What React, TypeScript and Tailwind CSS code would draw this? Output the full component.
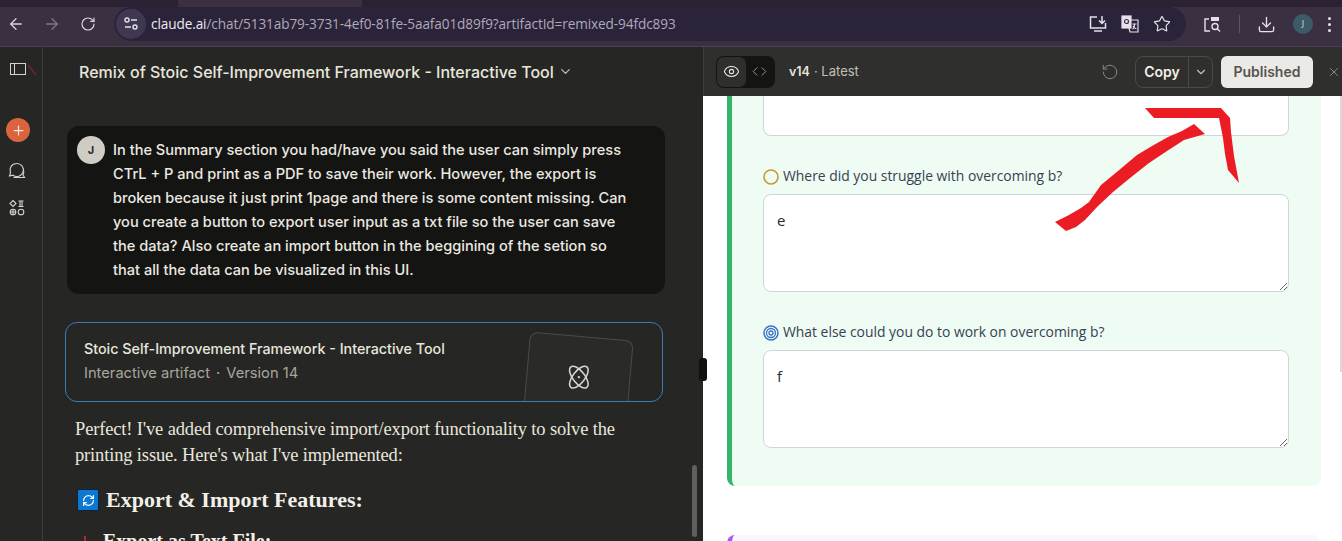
import React from "react";
import {
	ArrowLeft,
	ArrowRight,
	ChevronDown,
	Code,
	Download,
	Eye,
	Plus,
	RefreshCw,
	RotateCcw,
	RotateCw,
	Star,
	X,
} from "lucide-react";

const uiFont = "font-['Inter','Noto_Sans',sans-serif]";

const TuneIcon = () => (
	<svg width="16" height="16" viewBox="0 0 16 16" fill="none" stroke="#e6e0ea" strokeWidth="1.4">
		<circle cx="4" cy="4" r="2" />
		<path d="M8 4h6M2 11h6" />
		<circle cx="12" cy="11" r="2" />
	</svg>
);

const InstallIcon = () => (
	<svg width="20" height="20" viewBox="0 0 20 20" fill="none" stroke="#e6e0ea" strokeWidth="1.5">
		<path d="M9 3H2.500v11h15V9M6 17h8M14 2v7M11 6.500l3 3 3-3" />
	</svg>
);

const TranslateIcon = () => (
	<svg width="20" height="20" viewBox="0 0 20 20" fill="none" stroke="#e6e0ea" strokeWidth="1.2">
		<rect x="2" y="2" width="9" height="12" fill="#e6e0ea" />
		<path d="M11 6h7v12h-8l-1-4" />
		<path d="M12.500 10h4M14.500 10c0 3-1 4.500-2 5M13 12c.8 1.500 2 2.500 3.500 3" />
		<circle cx="6.500" cy="7.500" r="2" stroke="#3a3042" />
	</svg>
);

const LensIcon = () => (
	<svg width="20" height="20" viewBox="0 0 20 20" fill="none" stroke="#e6e0ea" strokeWidth="1.4">
		<path d="M8 17H3V5h4" />
		<rect x="9" y="3" width="8" height="4" fill="#e6e0ea" stroke="none" />
		<circle cx="13" cy="12.500" r="3" />
		<path d="M15.200 14.700L18 17.500" />
	</svg>
);

const PanelIcon = () => (
	<svg width="30" height="30" viewBox="0 0 30 30" fill="none">
		<rect x="2.500" y="6.500" width="15" height="11" stroke="#d6d4cc" strokeWidth="1" />
		<path d="M6.500 6.500v11" stroke="#d6d4cc" strokeWidth="1" />
		<path d="M20 8l8 10" stroke="#b3262a" strokeWidth="1" />
	</svg>
);

const ChatsIcon = () => (
	<svg width="20" height="20" viewBox="0 0 20 20" fill="none" stroke="#d6d4cc" strokeWidth="1.1">
		<path d="M9.500 2.500a6.500 6.500 0 0 0-6 9l-1 3.500 3.500-.8a6.500 6.500 0 1 0 3.500-11.700z" />
		<path d="M6.500 16.500h11l-1.500-2.500c.8-1.500 1-3 .5-4.500" />
	</svg>
);

const ProjectsIcon = () => (
	<svg width="18" height="18" viewBox="0 0 18 18" fill="none" stroke="#d6d4cc" strokeWidth="1.100">
		<path d="M5 1.500L8 4.500 5 7.500 2 4.500z" />
		<path d="M10.500 2h5M10.500 7.500h5M12 2v5.500M14 2v5.500" />
		<circle cx="5" cy="13" r="2.800" />
		<circle cx="13" cy="13" r="2.800" />
		<path d="M2 13h6M5 10v6" />
	</svg>
);

const ArtifactAtom = () => (
	<svg width="28" height="28" viewBox="0 0 28 28" fill="none" stroke="#d6d4cc" strokeWidth="1.500">
		<ellipse cx="14" cy="14" rx="6" ry="13" transform="rotate(-38 14 14)" />
		<ellipse cx="14" cy="14" rx="6" ry="13" transform="rotate(38 14 14)" />
		<circle cx="14" cy="14" r="1.200" fill="#d6d4cc" stroke="none" />
	</svg>
);

// the hand drawn arrow pasted over the screenshot
const RedArrow = () => (
	<svg className="absolute left-[1040px] top-[100px]" width="210" height="140" viewBox="0 0 210 140" fill="#ec1c24">
		<path d="M105 8H181L190 18L191 32L194 56L199 83L188 70L185 54L183 38L179 18H114Z" />
		<path d="M15 122L29 115L41 108L49 102L61 85L78 71L97 55L112 46L128 37L142 31L154 24L165 34L144 40L127 51L109 63L90 78L73 92L58 106L45 120L36 127L26 131Z" />
	</svg>
);

const YellowRing = () => (
	<svg width="16" height="16" viewBox="0 0 16 16" fill="none">
		<circle cx="8" cy="8" r="7" stroke="#c69a2f" strokeWidth="1.600" />
	</svg>
);

const BlueTarget = () => (
	<svg width="16" height="16" viewBox="0 0 16 16" fill="none" stroke="#3b73c9">
		<circle cx="8" cy="8" r="7" strokeWidth="1.500" />
		<circle cx="8" cy="8" r="4.500" strokeWidth="1.300" />
		<circle cx="8" cy="8" r="2" strokeWidth="1.300" />
	</svg>
);

const Question = ({ icon, label, value }: { icon: React.ReactNode; label: string; value: string }) => (
	<div>
		<label className="flex items-center gap-[4px] h-[20px] pt-[2px] mb-[8px] text-[13.900px] font-medium text-[#374151]">
			{icon}
			<span className="mt-[-2px]">{label}</span>
		</label>
		<textarea
			readOnly
			defaultValue={value}
			className="block w-full h-[98px] px-[13px] py-[14px] bg-white border border-[#d1d5db] rounded-[8px] text-[15px] leading-[22px] text-[#1f2937] outline-none resize-y"
		/>
	</div>
);

const App = () => {
	return (
		<div className="relative w-[1342px] h-[541px] overflow-hidden flex flex-col bg-[#262624]">
			{/* Browser chrome */}
			<div className="h-[7px] flex bg-[#2b2333]">
				<div className="ml-[178px] w-[184px] bg-[#3a3042]" />
			</div>
			<div className="h-[40px] flex items-start bg-[#3a3042] border-b border-[#4a4152] font-['Open_Sans',sans-serif]">
				<div className="flex items-center h-[34px] w-[114px] pl-[7px] shrink-0">
					<ArrowLeft size={18} strokeWidth={1.7} className="text-[#d9d3de]" />
					<ArrowRight size={18} strokeWidth={1.7} className="ml-[18px] text-[#7f7787]" />
					<RotateCw size={16} strokeWidth={1.8} className="ml-[19px] text-[#d9d3de]" />
				</div>
				<div className="flex items-center w-[1072px] h-[34px] shrink-0 rounded-full bg-[#2b2339]">
					<div className="ml-[2px] w-[30px] h-[30px] rounded-full bg-[#3f3850] flex items-center justify-center">
						<TuneIcon />
					</div>
					<span className="ml-[5px] text-[13.600px] text-[#b0a9b8] tracking-[-0.1px]">
						<span className="text-[#efeaf2]">claude.ai</span>/chat/5131ab79-3731-4ef0-81fe-5aafa01d89f9?artifactId=remixed-94fdc893
					</span>
					<div className="ml-auto mr-[15px] flex items-center">
						<InstallIcon />
						<span className="ml-[12px]"><TranslateIcon /></span>
						<Star size={18} strokeWidth={1.6} className="ml-[13px] text-[#e6e0ea]" />
					</div>
				</div>
				<div className="flex items-center h-[34px] flex-1 min-w-0">
					<span className="ml-[16px] shrink-0"><LensIcon /></span>
					<div className="ml-[17px] w-px h-[18px] shrink-0 bg-[#5d5566]" />
					<Download size={19} strokeWidth={1.7} className="ml-[17px] shrink-0 text-[#e6e0ea]" />
					<div className="ml-[17px] w-[20px] h-[20px] shrink-0 rounded-full bg-[#3c5a68] text-[9px] text-[#cfe0e6] flex items-center justify-center">J</div>
					<div className="ml-[15px] flex flex-col gap-[3px] shrink-0">
						<span className="w-[3px] h-[3px] rounded-full bg-[#e6e0ea]" />
						<span className="w-[3px] h-[3px] rounded-full bg-[#e6e0ea]" />
						<span className="w-[3px] h-[3px] rounded-full bg-[#e6e0ea]" />
					</div>
				</div>
			</div>

			<div className="flex flex-1 min-h-0">
				{/* Claude chat column */}
				<div className={`relative w-[703px] flex min-h-0 overflow-hidden bg-[#262624] ${uiFont}`}>
					<div className="w-[43px] shrink-0 border-r border-[#3e3e3b] flex flex-col items-start">
						<div className="mt-[10px] ml-[8px]"><PanelIcon /></div>
						<div className="mt-[31px] ml-[6px] w-[24px] h-[24px] rounded-full bg-[#d9643f] flex items-center justify-center">
							<Plus size={15} strokeWidth={2} className="text-[#f5e6df]" />
						</div>
						<div className="mt-[19px] ml-[7px]"><ChatsIcon /></div>
						<div className="mt-[18px] ml-[8px]"><ProjectsIcon /></div>
					</div>
					<div className="flex-1 min-w-0">
						<div className="h-[49px] flex items-center pl-[36px] text-[16px] font-medium text-[#e8e6dd]">
							Remix of Stoic Self-Improvement Framework - Interactive Tool
							<ChevronDown size={15} className="ml-[4px] text-[#c2c0b6]" />
						</div>
						<div className="ml-[24px] mr-[38px] mt-[30px] h-[168px] rounded-[12px] bg-[#141413] flex pl-[10px] pt-[10px]">
							<div className="w-[28px] h-[28px] shrink-0 rounded-full bg-[#cfccc3] text-[#2b2b29] text-[11px] font-bold flex items-center justify-center">J</div>
							<p className="ml-[8px] mt-[2px] w-[520px] text-[14.600px] leading-[24px] font-medium text-[#ebe9e0]">
								In the Summary section you had/have you said the user can simply press CTrL + P and print as a PDF to save their work. However, the export is broken because it just print 1page and there is some content missing. Can you create a button to export user input as a txt file so the user can save the data? Also create an import button in the beggining of the setion so that all the data can be visualized in this UI.
							</p>
						</div>
						<div className="relative ml-[22px] mr-[40px] mt-[28px] h-[80px] rounded-[12px] border border-[#3d7ab5] overflow-hidden pl-[18px] pt-[14px]">
							<div className="text-[14.300px] leading-[24px] font-medium text-[#e8e6dd]">Stoic Self-Improvement Framework - Interactive Tool</div>
							<div className="text-[14.700px] leading-[24px] text-[#a8a69c]">Interactive artifact<span className="mx-[6px]">·</span>Version 14</div>
							<div className="absolute left-[460px] top-[13px] w-[104px] h-[90px] rounded-[8px] border border-[#4a4a47] bg-[#2a2a28] rotate-[5deg] flex justify-center pt-[26px]">
								<div className="-rotate-[5deg] translate-x-[2px]"><ArtifactAtom /></div>
							</div>
						</div>
						<div className="ml-[32px] mt-[14px] w-[560px] font-['Liberation_Serif',serif] text-[#e8e6dd]">
							<p className="text-[18.500px] leading-[26px] tracking-[-0.15px]">
								Perfect! I've added comprehensive import/export functionality to solve the printing issue. Here's what I've implemented:
							</p>
							<h2 className="mt-[17px] ml-[2px] flex items-center text-[22px] leading-[30px] font-bold text-[#f2f0e8]">
								<span className="w-[22px] h-[22px] mr-[7px] rounded-[2px] border border-[#10233a] bg-[#0b78d1] flex items-center justify-center">
									<RefreshCw size={13} strokeWidth={2.2} className="text-white" />
								</span>
								Export & Import Features:
							</h2>
							<h3 className="mt-[14px] flex items-center text-[20px] leading-[24px] font-bold text-[#f2f0e8]">
								<span className="ml-[9px] mr-[17px] w-[2px] h-[10px] bg-[#b3262a]" />
								Export as Text File:
							</h3>
						</div>
					</div>
					{/* scrollbar */}
					<div className="absolute right-[6px] top-[418px] w-[5px] h-[72px] rounded-full bg-[#5f5f5b]" />
				</div>

				{/* Artifact panel */}
				<div className={`flex-1 min-w-0 flex flex-col ${uiFont}`}>
					<div className="h-[49px] shrink-0 flex items-center bg-[#2f2f2d] border-l border-[#3e3e3b] overflow-hidden">
						<div className="ml-[12px] h-[32px] w-[59px] shrink-0 rounded-[8px] bg-[#141413] flex items-center p-[1px]">
							<div className="w-[29px] h-[30px] rounded-[7px] bg-[#2f2f2d] flex items-center justify-center">
								<Eye size={17} strokeWidth={1.5} className="text-[#e8e6dd]" />
							</div>
							<Code size={15} strokeWidth={1.4} className="ml-[6px] text-[#a8a69c]" />
						</div>
						<span className="ml-[14px] mt-[1px] text-[12.500px] font-semibold text-[#e8e6dd]">v14</span>
						<span className="ml-[4px] mt-[1px] text-[13px] text-[#c2c0b6]">· Latest</span>
						<RotateCcw size={18} strokeWidth={1.1} className="ml-auto shrink-0 text-[#9a9890]" />
						<div className="ml-[16px] h-[32px] w-[78px] shrink-0 flex items-center rounded-[8px] border border-[#4a4a47]">
							<span className="w-[52px] text-center text-[14px] font-semibold text-[#f2f0e8]">Copy</span>
							<div className="flex-1 h-full border-l border-[#4a4a47] flex items-center justify-center">
								<ChevronDown size={14} className="text-[#c2c0b6]" />
							</div>
						</div>
						<div className="ml-[8px] w-[92px] h-[32px] shrink-0 rounded-[6px] bg-[#eceae6] text-[14px] font-semibold text-[#55544f] flex items-center justify-center">Published</div>
						<X size={14} strokeWidth={1.3} className="ml-[14px] mr-[1px] shrink-0 text-[#a8a69c]" />
					</div>

					<div className="relative flex-1 min-h-0 overflow-hidden bg-white pl-[24px] pr-[21px] font-['Open_Sans',sans-serif]">
						<div className="h-[390px] rounded-b-[8px] border-l-[5px] border-[#34b56a] bg-[#eefcf3] pl-[31px] pr-[32px]">
							<div className="h-[40px] bg-white border border-t-0 border-[#d1d5db] rounded-b-[8px]" />
							<div className="mt-[30px]">
								<Question icon={<YellowRing />} label="Where did you struggle with overcoming b?" value="e" />
							</div>
							<div className="mt-[30px]">
								<Question icon={<BlueTarget />} label="What else could you do to work on overcoming b?" value="f" />
							</div>
						</div>
						<div className="mt-[49px] h-[40px] rounded-t-[8px] border-l-[5px] border-[#a855f7] bg-[#faf5ff]" />
						{/* page scrollbar sliver */}
						<div className="absolute right-0 top-0 w-[2px] h-[276px] bg-[#d9d9d9]" />
					</div>
				</div>
			</div>
			{/* panel resize handle */}
			<div className="absolute left-[699px] top-[358px] w-[8px] h-[23px] rounded-[3px] bg-[#111110]" />
			<RedArrow />
		</div>
	);
};

export default App;
